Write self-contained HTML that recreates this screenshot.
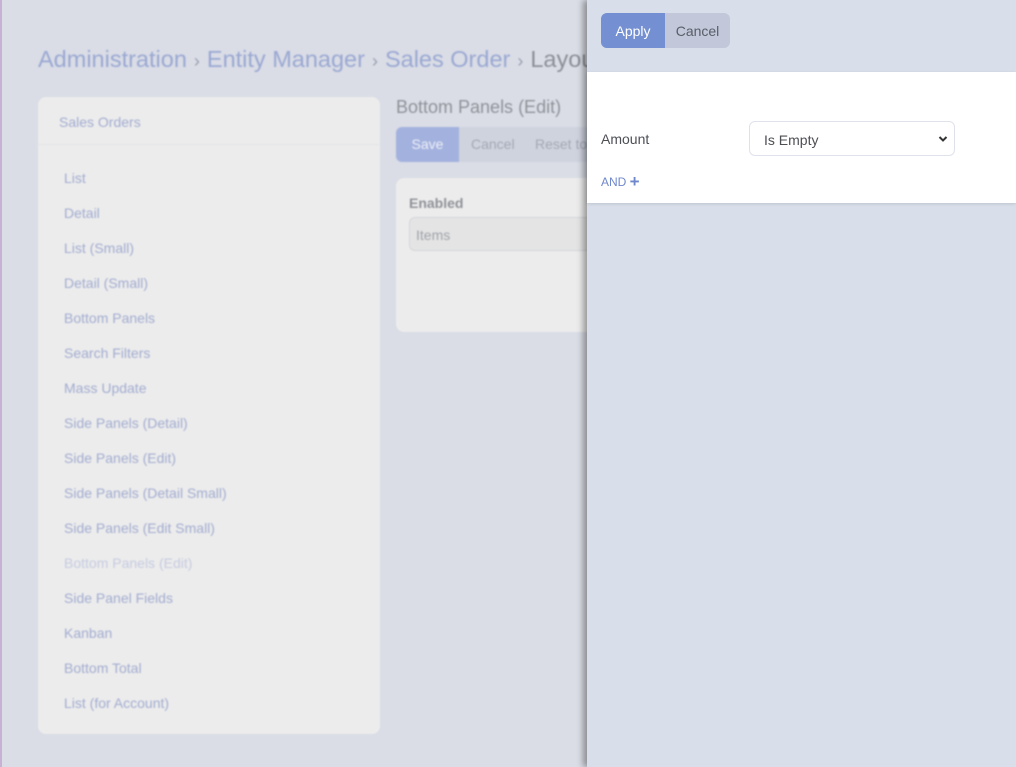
<!DOCTYPE html>
<html><head><meta charset="utf-8"><style>
*{box-sizing:border-box;margin:0;padding:0}
body{width:1016px;height:767px;overflow:hidden;background:#dadde6;font-family:"Liberation Sans","DejaVu Sans",sans-serif;position:relative}
#bg{position:absolute;left:0;top:0;width:1016px;height:767px;filter:blur(0.8px)}
.edge{position:absolute;left:0;top:0;width:2px;height:767px;background:#c7b2d6}
.crumb{position:absolute;left:38px;top:46px;font-size:23.5px;color:#9aa8d2;white-space:nowrap}
.crumb span.s{color:#9aa0b0;font-size:18px;margin:0 7px}
.crumb .last{color:#8c8f96}
.side{position:absolute;left:38px;top:97px;width:342px;height:637px;background:#ececec;border-radius:8px}
.side .h{height:48px;border-bottom:1px solid #e2e4e8;padding:17px 0 0 21px;font-size:14px;color:#a2acd0}
.side ul{list-style:none;padding-top:23px}
.side li{height:35px;padding-left:26px;font-size:14px;color:#a2acd0;line-height:20px}
.side li.dis{color:#c6cbe0}
.t2{position:absolute;left:396px;top:97px;font-size:18px;color:#8f9298}
.btns{position:absolute;left:396px;top:127px;height:35px;width:200px;background:#cfd3de;border-radius:6px;font-size:14px;color:#a4a8b4}
.btns .sv{position:absolute;left:0;top:0;width:63px;height:35px;background:#a3b1de;color:#eef0f8;border-radius:6px 0 0 6px;text-align:center;line-height:35px}
.card{position:absolute;left:396px;top:178px;width:200px;height:154px;background:#ececec;border-radius:8px}
.card b{position:absolute;left:13px;top:17px;font-size:14px;color:#8f9298}
.card .in{position:absolute;left:13px;top:39px;width:190px;height:34px;border:1px solid #d4d6da;border-radius:6px;background:#e4e4e4;color:#a0a3aa;font-size:14px;padding:9px 0 0 6px}
#panel{position:absolute;left:587px;top:0;width:429px;height:767px;background:#d9dfea;box-shadow:-4px 0 6px rgba(0,0,0,.35)}
.pb{position:absolute;left:14px;top:13px;height:35px;width:129px;border-radius:6px;background:#c2c7da;overflow:hidden;font-size:14px}
.pb .a{position:absolute;left:0;top:0;width:64px;height:35px;background:#7490d2;color:#fff;text-align:center;line-height:36px}
.pb .c{position:absolute;left:64px;top:0;width:65px;height:35px;color:#5a5e68;text-align:center;line-height:36px}
.wb{position:absolute;left:0;top:72px;width:429px;height:131px;background:#fff;box-shadow:0 1px 3px rgba(0,0,0,.12)}
.lbl{position:absolute;left:14px;top:59px;font-size:14px;color:#4d4f55}
.sel{position:absolute;left:162px;top:49px;width:206px;height:35px;border:1px solid #dfe2ea;border-radius:6px;font-size:14px;color:#4d4f55;padding:10px 0 0 14px}
.sel svg{position:absolute;right:6px;top:13px}
.and{position:absolute;left:14px;top:100px;font-size:12px;color:#6f88cc}
</style></head><body>
<div id="bg">
<div class="crumb">Administration<span class="s">›</span>Entity Manager<span class="s">›</span>Sales Order<span class="s">›</span><span class="last">Layouts</span></div>
<div class="side"><div class="h">Sales Orders</div><ul>
<li>List</li><li>Detail</li><li>List (Small)</li><li>Detail (Small)</li><li>Bottom Panels</li><li>Search Filters</li><li>Mass Update</li><li>Side Panels (Detail)</li><li>Side Panels (Edit)</li><li>Side Panels (Detail Small)</li><li>Side Panels (Edit Small)</li><li class="dis">Bottom Panels (Edit)</li><li>Side Panel Fields</li><li>Kanban</li><li>Bottom Total</li><li>List (for Account)</li></ul></div>
<div class="t2">Bottom Panels (Edit)</div>
<div class="btns"><div class="sv">Save</div><span style="position:absolute;left:75px;top:9px">Cancel</span><span style="position:absolute;left:139px;top:9px">Reset to</span></div>
<div class="card"><b>Enabled</b><div class="in">Items</div></div>
</div>
<div class="edge"></div>
<div id="panel">
<div class="pb"><div class="a">Apply</div><div class="c">Cancel</div></div>
<div class="wb">
<div class="lbl">Amount</div>
<div class="sel">Is Empty<svg width="10" height="8" viewBox="0 0 10 8"><path d="M1.5 2 L5 5.5 L8.5 2" stroke="#333" stroke-width="2" fill="none"/></svg></div>
<div class="and">AND <span style="font-size:17px;font-weight:bold;vertical-align:-1px">+</span></div>
</div>
</div>
</body></html>
